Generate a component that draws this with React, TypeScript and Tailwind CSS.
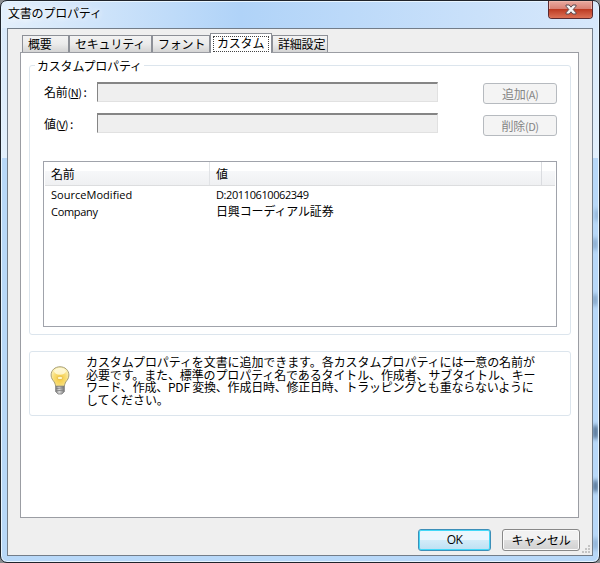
import clsx from 'clsx';

const tabs = [
  { label: '概要', width: 'w-[47px]' },
  { label: 'セキュリティ', width: 'w-[83px]' },
  { label: 'フォント', width: 'w-[58px]' },
  { label: 'カスタム', width: 'w-[62px]', active: true },
  { label: '詳細設定', width: 'w-[56px]' },
];

const fields = [
  { label: '名前', hotkey: 'N', action: '追加', actionKey: 'A' },
  { label: '値', hotkey: 'V', action: '削除', actionKey: 'D' },
];

const rows = [
  { name: 'SourceModified', value: 'D:20110610062349', nameStyle: 'tracking-[0.03px]', valueStyle: 'text-[11px] tracking-[-0.4px]' },
  { name: 'Company', value: '日興コーディアル証券', nameStyle: 'tracking-[-0.3px]', valueStyle: 'text-[12px] tracking-[-0.15px]' },
];

function TitleBar() {
  return (
    <div className="flex h-[26px] justify-between pl-[6px] pr-[5px]">
      <span className="mt-[2px] leading-[18px] [text-shadow:0_0_6px_#fff,0_0_8px_#fff]">文書のプロパティ</span>
      <button className="-mt-px flex h-[18px] w-[45px] items-center justify-center rounded-b-[4px] border border-t-0 border-[#5a2a30] bg-linear-to-b from-[#e9aaa0] from-0% via-[#d98275] via-45% to-[#d1604b] shadow-[inset_0_0_0_1px_#efb5a9]">
        <span className="flex h-full w-full items-center justify-center rounded-b-[3px] bg-linear-to-b from-transparent from-50% via-[#bd3a22] via-50% to-[#dc7055]">
          <svg width="12" height="11" viewBox="0 0 12 11">
            <path d="M1 1h3.2L6 3.2 7.8 1H11v1.2L8.200 5.500l2.800 3.300V10H7.800L6 7.800 4.200 10H1V8.800l2.800-3.300L1 2.200z" fill="#f6f6f6" stroke="#5d4a50" />
          </svg>
        </span>
      </button>
    </div>
  );
}

function TabStrip() {
  return (
    <div className="relative z-10 -mb-px flex h-5 items-end pl-[2px]">
      {tabs.map((tab) => (
        <div
          key={tab.label}
          className={clsx(
            'border-l border-t border-r border-[#8d9097]',
            tab.width,
            tab.active
              ? 'h-5 bg-white p-[2px] pb-[1px]'
              : 'mb-px h-[17px] bg-linear-to-b from-[#f3f3f3] from-0% via-[#ebebeb] via-50% to-[#d4d4d4] pl-[5px]',
          )}
        >
          {tab.active ? (
            <div className="h-4 border border-dotted border-[#444] pl-[3px] leading-[12px]">{tab.label}</div>
          ) : (
            <div className="leading-[16px]">{tab.label}</div>
          )}
        </div>
      ))}
    </div>
  );
}

function Hotkey({ letter, underline = false }: { letter: string; underline?: boolean }) {
  return (
    <span className="text-[11px] tracking-[-0.5px]">
      (<span className={clsx(underline && 'underline')}>{letter}</span>)
    </span>
  );
}

function BulbIcon() {
  return (
    <svg width="20" height="29" viewBox="0 0 20 30">
      <defs>
        <radialGradient id="glass" cx="0.5" cy="0.6" r="0.6">
          <stop offset="0" stopColor="#f5c93b" />
          <stop offset="0.55" stopColor="#f8dc72" />
          <stop offset="1" stopColor="#fdf3bd" />
        </radialGradient>
        <linearGradient id="cap">
          <stop offset="0" stopColor="#777" />
          <stop offset="0.4" stopColor="#ddd" />
          <stop offset="1" stopColor="#777" />
        </linearGradient>
      </defs>
      <path d="M10 .8C4.800.8.8 4.400.8 9.300c0 3.700 1.800 5.200 3.200 7.200 1 1.500 1.200 3 1.500 4.500h9c.3-1.500.5-3 1.500-4.500 1.400-2 3.200-3.500 3.200-7.200C19.200 4.400 15.200.8 10 .8z" fill="url(#glass)" stroke="#a39a72" />
      <ellipse cx="10" cy="5.500" rx="6" ry="3.500" fill="#fffbe2" opacity=".8" />
      <path d="M7 11.500q3-2 6 0l-1 2.500H8z" fill="#fff8c8" stroke="#e6bb45" strokeWidth=".9" />
      <path d="M5.500 21h9v5.500L12 29H8l-2.500-2.500z" fill="url(#cap)" stroke="#777" strokeWidth=".8" />
      <path d="M6 23.300l8-.8M6 25.700l8-.8" stroke="#777" strokeWidth=".8" />
    </svg>
  );
}

function PropertyList() {
  return (
    <div className="ml-[13px] mt-[25px] h-[166px] w-[514px] border border-[#a0a3ab]">
      <div className="mx-px flex h-6 border-b border-[#dcdddf] bg-linear-to-b from-white from-40% via-[#f6f7f9] via-40% to-[#eff0f2] leading-[24px]">
        <div className="w-[165px] border-r border-[#e1e3e6] pl-[6px]">名前</div>
        <div className="w-[332px] border-r border-[#dadce0] pl-[6px]">値</div>
      </div>
      <div className="font-['Open_Sans','Noto_Sans_CJK_JP',sans-serif]">
        {rows.map((row) => (
          <div key={row.name} className="flex h-[17px] leading-[17px]">
            <div className={clsx('w-[166px] pl-[7px] text-[11px]', row.nameStyle)}>{row.name}</div>
            <div className={clsx('pl-[6px]', row.valueStyle)}>{row.value}</div>
          </div>
        ))}
      </div>
    </div>
  );
}

// dark shapes of the window behind, showing through the glass frame
function GlassSmudges() {
  return (
    <div className="absolute top-[150px] right-px h-[405px] w-[5px] overflow-hidden">
      <div className="mt-[58px] ml-[2px] h-3 w-1 rounded-full bg-[#6d90b5] opacity-60 blur-[2px]" />
      <div className="mt-[17px] h-3 w-1 rounded-full bg-[#56789c] opacity-60 blur-[2px]" />
      <div className="mt-[44px] h-3 w-1 rounded-full bg-[#56789c] opacity-70 blur-[2px]" />
      <div className="mt-[119px] h-[14px] w-[5px] rounded-full bg-[#2c4a6b] opacity-80 blur-[2px]" />
      <div className="mt-[41px] h-3 w-[5px] rounded-full bg-[#2c4a6b] opacity-80 blur-[2px]" />
      <div className="mt-[46px] h-3 w-[5px] rounded-full bg-[#6d90b5] opacity-60 blur-[2px]" />
    </div>
  );
}

export default function App() {
  return (
    <div className="h-[563px] w-[600px] overflow-hidden bg-[#8b8d90] font-['Noto_Sans_CJK_JP',sans-serif] text-[12px] tracking-[-0.2px] whitespace-nowrap text-black">
      <div className="relative h-[563px] w-[600px] overflow-hidden rounded-[7px] border border-[#20242b] bg-linear-to-b from-[#d7e8fa] from-0% via-[#e3f0fc] via-28% to-[#b8d8f8] to-28% p-px shadow-[inset_0_0_0_1px_#e8f5ff]">
        <div className="absolute inset-x-px top-px h-[26px] bg-linear-to-r from-[#e3effb] from-0% via-[#b0d3f8] via-40% to-[#d7e8fb]" />
        <GlassSmudges />
        <div className="relative">
          <TitleBar />
          <div className="relative ml-[5px] h-[528px] w-[586px] border border-[#737d89] bg-[#efefef] pt-1 pl-3">
            <TabStrip />
            <div className="h-[466px] w-[559px] border border-[#9b9da3] bg-white pt-[12px] pl-2">
              <fieldset className="relative h-[270px] w-[542px] rounded-[3px] border border-[#dce5ed] pt-[16px]">
                <div className="absolute -top-[9px] left-[5px] bg-white px-[2px] leading-[18px]">カスタムプロパティ</div>
                {fields.map((field, i) => (
                  <div key={field.label} className={clsx('flex h-[22px]', i > 0 && 'mt-[10px]')}>
                    <label className="w-[67px] pl-[14px] leading-[20px]">
                      {field.label}
                      <Hotkey letter={field.hotkey} underline />
                      <span className="pl-[2px]">:</span>
                    </label>
                    <div className={clsx('h-5 w-[341px] border border-t-2 border-[#e1e1e1] border-t-[#858585] border-l-[#858585] bg-[#efefef]', i > 0 && '-mt-px')} />
                    <button className="ml-[45px] mt-px h-[21px] w-[74px] rounded-[3px] border border-[#b6babf] bg-[#f4f4f4] leading-[19px] text-[#858585]">
                      {field.action}
                      <Hotkey letter={field.actionKey} />
                    </button>
                  </div>
                ))}
                <PropertyList />
              </fieldset>
              <div className="mt-4 flex h-[65px] w-[542px] rounded-[3px] border border-[#dce5ed]">
                <div className="ml-5 mt-[14px]">
                  <BulbIcon />
                </div>
                <p className="ml-4 mt-1 leading-[12.7px] tracking-[-0.08px]">
                  カスタムプロパティを文書に追加できます。各カスタムプロパティには一意の名前が
                  <br />
                  <span className="tracking-[-0.12px]">必要です。また、標準のプロパティ名であるタイトル、作成者、サブタイトル、キー</span>
                  <br />
                  <span className="tracking-[-0.22px]">ワード、作成、PDF 変換、作成日時、修正日時、トラッピングとも重ならないように</span>
                  <br />
                  してください。
                </p>
              </div>
            </div>
            <div className="mt-[11px] flex gap-[11px] pl-[398px]">
              <button className="h-[22px] w-[73px] rounded-[3px] border border-[#3c8fb8] bg-linear-to-b from-[#eaf6fd] from-50% via-[#d3ecf9] via-50% to-[#bce0f3] font-['Open_Sans',sans-serif] text-[12px] leading-[20px] tracking-[-0.6px] shadow-[inset_0_0_0_1px_#42d8f8]">
                OK
              </button>
              <button className="h-[22px] w-[78px] rounded-[3px] border border-[#888] bg-linear-to-b from-[#f2f2f2] from-50% via-[#dfdfdf] via-50% to-[#d0d0d0] leading-[20px] shadow-[inset_0_0_0_1px_#fbfbfb]">
                キャンセル
              </button>
            </div>
            <svg className="absolute right-px bottom-px" width="10" height="10" viewBox="0 0 10 10">
              <path d="M7 1h2v2H7zM4 4h2v2H4zM7 4h2v2H7zM1 7h2v2H1zM4 7h2v2H4zM7 7h2v2H7z" fill="#c4c4c4" />
            </svg>
          </div>
        </div>
      </div>
    </div>
  );
}
